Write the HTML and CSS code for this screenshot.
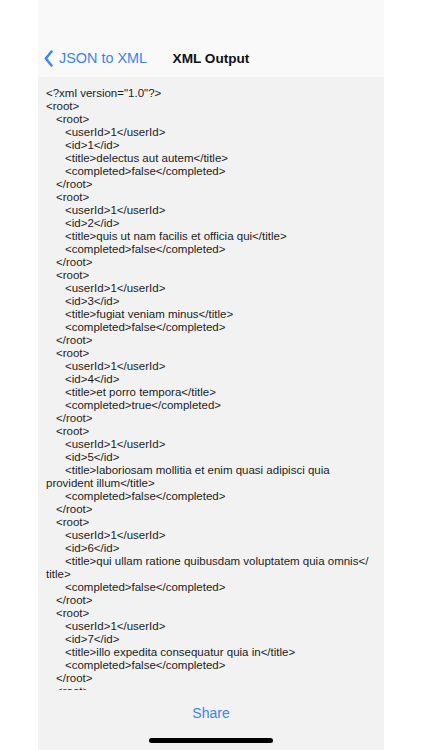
FILE: index.html
```html
<!DOCTYPE html>
<html lang="en">
<head>
    <meta charset="UTF-8">
    <meta name="viewport" content="width=device-width, initial-scale=1.0">
    <title>XML Output</title>
    <link rel="stylesheet" href="styles.css">
</head>
<body>
    <div class="screen">
        <header class="nav">
            <div class="nav-row">
                <a class="back" href="#">
                    <svg class="chevron" width="9" height="17" viewBox="0 0 9 17">
                        <path d="M7.5 1.5 L1.8 8.5 L7.5 15.5" fill="none" stroke="currentColor" stroke-width="2.4" stroke-linecap="round" stroke-linejoin="round"/>
                    </svg>
                    <span>JSON to XML</span>
                </a>
                <h1 class="nav-title">XML Output</h1>
                <div></div>
            </div>
        </header>

        <main class="output">
            <div class="ln">&lt;?xml version="1.0"?&gt;</div>
            <div class="ln">&lt;root&gt;</div>

            <div class="ln d1">&lt;root&gt;</div>
            <div class="ln d2">&lt;userId&gt;1&lt;/userId&gt;</div>
            <div class="ln d2">&lt;id&gt;1&lt;/id&gt;</div>
            <div class="ln d2">&lt;title&gt;delectus aut autem&lt;/title&gt;</div>
            <div class="ln d2">&lt;completed&gt;false&lt;/completed&gt;</div>
            <div class="ln d1">&lt;/root&gt;</div>

            <div class="ln d1">&lt;root&gt;</div>
            <div class="ln d2">&lt;userId&gt;1&lt;/userId&gt;</div>
            <div class="ln d2">&lt;id&gt;2&lt;/id&gt;</div>
            <div class="ln d2">&lt;title&gt;quis ut nam facilis et officia qui&lt;/title&gt;</div>
            <div class="ln d2">&lt;completed&gt;false&lt;/completed&gt;</div>
            <div class="ln d1">&lt;/root&gt;</div>

            <div class="ln d1">&lt;root&gt;</div>
            <div class="ln d2">&lt;userId&gt;1&lt;/userId&gt;</div>
            <div class="ln d2">&lt;id&gt;3&lt;/id&gt;</div>
            <div class="ln d2">&lt;title&gt;fugiat veniam minus&lt;/title&gt;</div>
            <div class="ln d2">&lt;completed&gt;false&lt;/completed&gt;</div>
            <div class="ln d1">&lt;/root&gt;</div>

            <div class="ln d1">&lt;root&gt;</div>
            <div class="ln d2">&lt;userId&gt;1&lt;/userId&gt;</div>
            <div class="ln d2">&lt;id&gt;4&lt;/id&gt;</div>
            <div class="ln d2">&lt;title&gt;et porro tempora&lt;/title&gt;</div>
            <div class="ln d2">&lt;completed&gt;true&lt;/completed&gt;</div>
            <div class="ln d1">&lt;/root&gt;</div>

            <div class="ln d1">&lt;root&gt;</div>
            <div class="ln d2">&lt;userId&gt;1&lt;/userId&gt;</div>
            <div class="ln d2">&lt;id&gt;5&lt;/id&gt;</div>
            <div class="ln d2">&lt;title&gt;laboriosam mollitia et enim quasi adipisci quia</div>
            <div class="ln">provident illum&lt;/title&gt;</div>
            <div class="ln d2">&lt;completed&gt;false&lt;/completed&gt;</div>
            <div class="ln d1">&lt;/root&gt;</div>

            <div class="ln d1">&lt;root&gt;</div>
            <div class="ln d2">&lt;userId&gt;1&lt;/userId&gt;</div>
            <div class="ln d2">&lt;id&gt;6&lt;/id&gt;</div>
            <div class="ln d2">&lt;title&gt;qui ullam ratione quibusdam voluptatem quia omnis&lt;/</div>
            <div class="ln">title&gt;</div>
            <div class="ln d2">&lt;completed&gt;false&lt;/completed&gt;</div>
            <div class="ln d1">&lt;/root&gt;</div>

            <div class="ln d1">&lt;root&gt;</div>
            <div class="ln d2">&lt;userId&gt;1&lt;/userId&gt;</div>
            <div class="ln d2">&lt;id&gt;7&lt;/id&gt;</div>
            <div class="ln d2">&lt;title&gt;illo expedita consequatur quia in&lt;/title&gt;</div>
            <div class="ln d2">&lt;completed&gt;false&lt;/completed&gt;</div>
            <div class="ln d1">&lt;/root&gt;</div>

            <div class="ln d1">&lt;root&gt;</div>
        </main>

        <footer class="toolbar">
            <button class="share">Share</button>
            <div class="home-indicator"></div>
        </footer>
    </div>
</body>
</html>
```

FILE: styles.css
```css
:root {
    --color-page: #ffffff;
    --color-nav: #f9f9f9;
    --color-panel: #f2f2f2;
    --color-text: #1c1c1e;
    --color-link: #3a82f7;
}

body {
    margin: 0;
    background-color: var(--color-page);
    font-family: 'Liberation Sans', Arial, sans-serif;
    color: var(--color-text);
}

.screen {
    width: 346px;
    height: 750px;
    margin-left: 38px;
    display: flex;
    flex-direction: column;
    overflow: hidden;
}

.nav {
    height: 77px;
    background-color: var(--color-nav);
    padding-top: 42px;
    box-sizing: border-box;
}

.nav-row {
    height: 32px;
    display: grid;
    grid-template-columns: 1fr auto 1fr;
    align-items: center;
}

.back {
    display: flex;
    align-items: center;
    gap: 6px;
    padding-left: 6px;
    color: var(--color-link);
    text-decoration: none;
    font-size: 14.4px;
    white-space: nowrap;
}

.chevron {
    display: block;
}

.nav-title {
    margin: 0;
    font-size: 13.6px;
    font-weight: bold;
    color: #111111;
}

.output {
    flex: 1;
    overflow: hidden;
    background-color: var(--color-panel);
    padding: 10px 8px 0;
    font-size: 11.5px;
    line-height: 13px;
}

.ln {
    white-space: nowrap;
}

.d1 {
    padding-left: 10px;
}

.d2 {
    padding-left: 19px;
}

.toolbar {
    height: 60px;
    flex-shrink: 0;
    background-color: var(--color-panel);
    display: flex;
    flex-direction: column;
    align-items: center;
}

.share {
    margin-top: 14px;
    padding: 0;
    border: none;
    background: none;
    font-family: inherit;
    font-size: 14px;
    line-height: 18px;
    color: var(--color-link);
}

.home-indicator {
    margin-top: 16px;
    width: 124px;
    height: 5px;
    border-radius: 3px;
    background-color: #000000;
}
```
